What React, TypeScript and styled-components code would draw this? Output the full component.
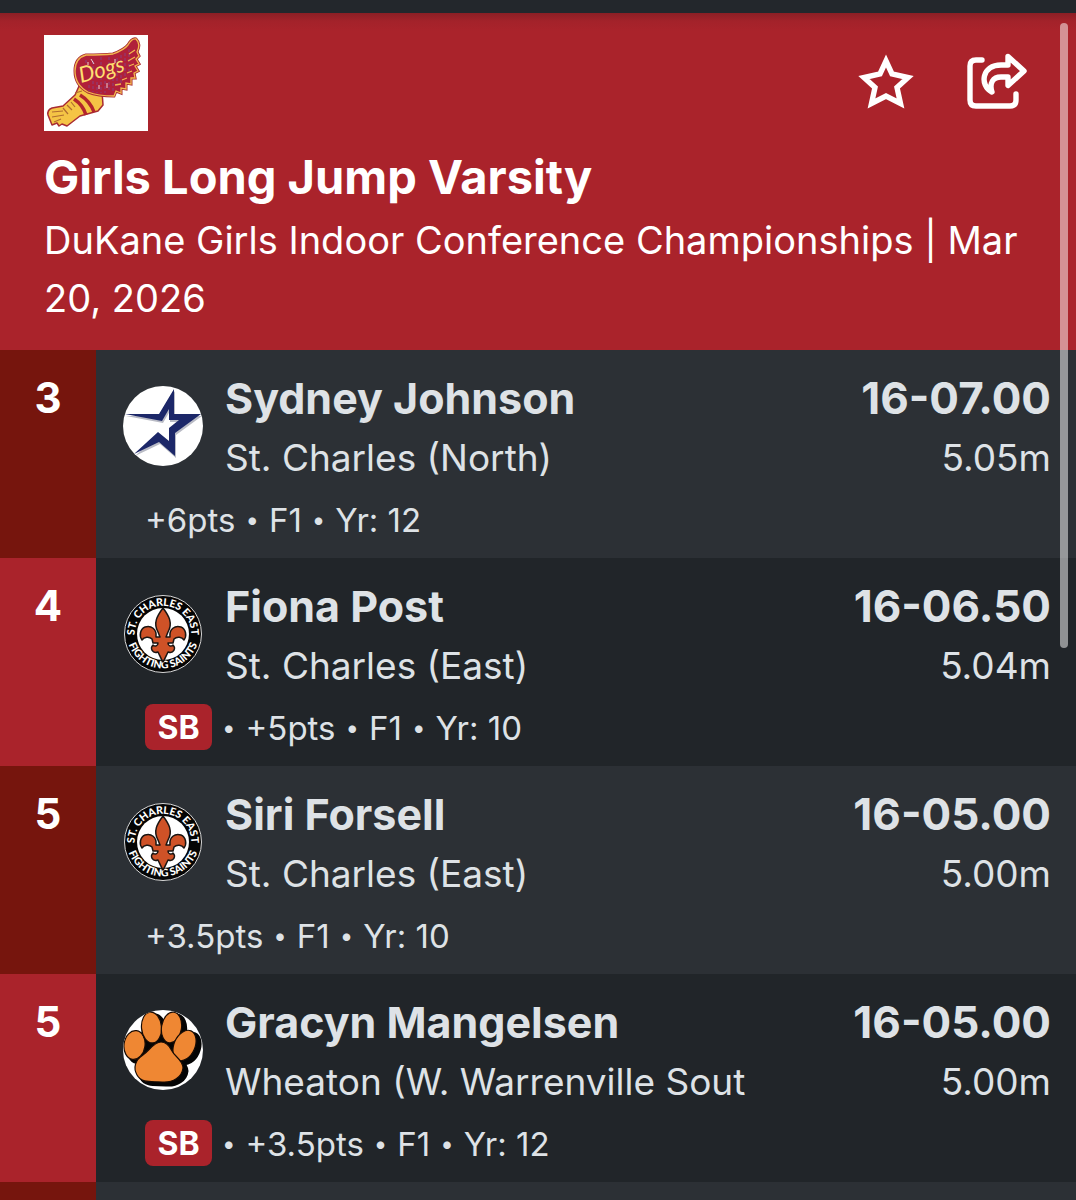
import React from "react";
import styled, { createGlobalStyle } from "styled-components";

const GlobalStyle = createGlobalStyle`
  *, *::before, *::after { box-sizing: border-box; }
  body {
    margin: 0;
    background: #212529;
    font-family: Inter, "Liberation Sans", sans-serif;
  }
`;

const Page = styled.main`
  position: relative;
  display: flex;
  flex-direction: column;
  height: 100vh;
  overflow: hidden;
  background: #212529;
  color: #dee2e6;
`;

const TopBar = styled.div`
  flex: none;
  height: 13px;
  background: #23272c;
`;

const Header = styled.header`
  flex: none;
  padding: 22px 44px 23px;
  background: linear-gradient(#8b1f25, #a3222a 8px, #aa232b 18px);
  color: #fff;
`;

const HeaderTop = styled.div`
  display: flex;
  align-items: center;
  justify-content: space-between;
  margin-bottom: 16px;
`;

const Actions = styled.div`
  display: flex;
  gap: 44px;
`;

const IconButton = styled.button`
  display: block;
  width: 68px;
  height: 68px;
  padding: 0;
  border: 0;
  background: none;
  color: #fff;
  cursor: pointer;
`;

const Title = styled.h1`
  margin: 0 0 4px;
  font-size: 47px;
  line-height: 60px;
  font-weight: 700;
`;

const Subtitle = styled.p`
  margin: 0;
  font-size: 38px;
  line-height: 58px;
`;

const Results = styled.ol`
  flex: 1;
  display: flex;
  flex-direction: column;
  margin: 0;
  padding: 0;
  list-style: none;
`;

const Row = styled.li<{ $shaded: boolean; $fill?: boolean }>`
  flex: ${(p) => (p.$fill ? "1 0 0" : "none")};
  display: grid;
  grid-template-columns: 96px 1fr;
  background: ${(p) => (p.$shaded ? "#2c3035" : "#212529")};
`;

const Rank = styled.div<{ $shaded: boolean }>`
  padding-top: 19px;
  background: ${(p) => (p.$shaded ? "#76150d" : "#aa232b")};
  color: #fff;
  font-size: 42px;
  line-height: 58px;
  font-weight: 700;
  text-align: center;
`;

const Entry = styled.div`
  min-width: 0;
  padding: 19px 25px 16px 27px;
`;

const Performance = styled.div`
  display: grid;
  grid-template-columns: 80px minmax(0, 1fr) auto;
  column-gap: 22px;
  margin-bottom: 7px;
`;

const Emblem = styled.div`
  align-self: start;
  height: 80px;
  margin-top: 17px;
`;

const Column = styled.div<{ $end?: boolean }>`
  min-width: 0;
  text-align: ${(p) => (p.$end ? "right" : "left")};
  white-space: nowrap;
`;

const Primary = styled.div`
  font-size: 43px;
  line-height: 58px;
  font-weight: 700;
`;

const Mark = styled(Primary)`
  font-size: 44px;
`;

const Secondary = styled.div`
  font-size: 37px;
  line-height: 62px;
`;

const Meta = styled.div`
  display: flex;
  align-items: center;
  gap: 10px;
  height: 46px;
  margin-left: 22px;
  font-size: 33px;
  line-height: 44px;
`;

const Detail = styled.span`
  padding-top: 2px;
`;

const Bullet = styled.span`
  padding-top: 2px;
  font-size: 24px;
`;

const Badge = styled.span`
  width: 67px;
  padding-top: 2px;
  border-radius: 8px;
  background: #aa232b;
  color: #fff;
  font-size: 32px;
  font-weight: 700;
  text-align: center;
`;

const ScrollThumb = styled.div`
  position: absolute;
  top: 23px;
  right: 8px;
  width: 8px;
  height: 625px;
  border-radius: 4px;
  background: rgba(255, 255, 255, 0.5);
`;

const Drawing = styled.svg`
  display: block;
  overflow: visible;
`;

const RoundDrawing = styled(Drawing)`
  border-radius: 50%;
  overflow: hidden;
`;

function StarIcon() {
  return (
    <Drawing width="68" height="68" viewBox="0 0 68 68" fill="none" stroke="currentColor" strokeWidth="5.4" aria-hidden="true">
      <path d="M34 12L40 25L56 28.500L45 38.500L48.500 54.500L34 47L19.500 54.500L23 38.500L12 28.500L28 25Z" />
    </Drawing>
  );
}

function ShareIcon() {
  return (
    <Drawing width="68" height="68" viewBox="0 0 68 68" fill="none" stroke="currentColor" strokeWidth="5.4" strokeLinecap="round" strokeLinejoin="round" aria-hidden="true">
      <path d="M18 11H12Q6 11 6 17V51Q6 57 12 57H46Q52 57 52 51V45" />
      <path d="M44 7.500L60 22L44 36.500V28H37C29 28 25 34 28 43C15 36 18 16 37 16H44Z" />
    </Drawing>
  );
}

function WingedFootLogo() {
  return (
    <Drawing width="104" height="96" viewBox="0 0 104 96" role="img" aria-label="Dogs">
      <rect width="104" height="96" fill="#fff" />
      <path d="M36 49L31 60L19 71L8 73Q3 75 4 80L8 90L13 88L15 91L18 89L23 91L36 81L54 76L59 70L58 56Z" fill="#f5c445" stroke="#a82b32" strokeWidth="1.500" strokeLinejoin="round" />
      <path d="M31 36Q31 23 42 20Q58 20 69 19Q80 15 84 10Q88 3 92 4Q97 9 93 17L95 21L92 24L95 29L91 31L94 36L90 38L91 43L87 43L87 49L82 48L82 54L77 53L77 58L72 56L70 61Q54 61 44 57Q31 50 31 36Z" fill="#a82b32" stroke="#a82b32" strokeWidth="3" />
      <path d="M31 36Q31 23 42 20Q58 20 69 19Q80 15 84 10Q88 3 92 4Q97 9 93 17L95 21L92 24L95 29L91 31L94 36L90 38L91 43L87 43L87 49L82 48L82 54L77 53L77 58L72 56L70 61Q54 61 44 57Q31 50 31 36Z" fill="#b0203a" stroke="#f3b84f" strokeWidth="1.300" />
      <path d="M45 50V56M49 26V57M53 47V58M57 22V58M61 46V58M65 22V57M69 43V56M73 23V52M77 20V48M81 18V43M85 14V37M42 25V34" stroke="#8a3f7c" strokeWidth="1" strokeDasharray="3 2" />
      <path d="M47 24L50 29M55 50V54M63 48V53M71 24V28M44 27V30" stroke="#e9cfd6" strokeWidth="1" />
      <path d="M85 31L90 29M84 26L91 22M83 38L88 36M78 45L83 43M71 50L77 49M85 19L91 15" stroke="#f3b84f" strokeWidth="1.300" />
      <path d="M30 64Q39 70 42 80M36 60Q46 66 50 77" fill="none" stroke="#b3242c" strokeWidth="3.500" />
      <path d="M27 67L31 72M23 70L28 75M19 73L24 79M8 77L19 76M8 82L20 80M10 87L17 84M31 58L38 56" stroke="#b06c30" strokeWidth="1.200" />
      <text x="37" y="48" transform="rotate(-15 37 48)" fill="#ffe070" fontFamily="Lato, sans-serif" fontSize="22" fontStyle="italic" fontWeight="400">Dogs</text>
    </Drawing>
  );
}

function StarLogo() {
  return (
    <RoundDrawing width="80" height="80" viewBox="0 0 80 80" role="img" aria-label="St. Charles North">
      <rect width="80" height="80" fill="#fff" />
      <path transform="translate(1 2)" fill="#b9bbc5" d="M2 28L36 28L51 3V28H78L52 47V70L36 56L11 68L35 46L46 55V42L56 34H46V23L39 35Z" />
      <path fill="#1c2768" d="M2 28L36 28L51 3V28H78L52 47V70L36 56L11 68L35 46L46 55V42L56 34H46V23L39 35Z" />
    </RoundDrawing>
  );
}

function SaintsLogo({ id }: { id: string }) {
  return (
    <Drawing width="80" height="80" viewBox="0 0 80 80" role="img" aria-label="St. Charles East Fighting Saints">
      <defs>
        <path id={`${id}-top`} d="M13.500 50A28.300 28.300 0 1 1 66.500 50" />
        <path id={`${id}-bottom`} d="M4 44A36.500 36.500 0 0 0 76 44" />
      </defs>
      <circle cx="40" cy="40" r="38.500" fill="#050505" stroke="#d8d8d8" strokeWidth="1" />
      <circle cx="40" cy="40" r="26" fill="#fff" />
      <g fill="#fff" fontFamily="Lato, sans-serif" fontSize="11" fontWeight="900">
        <text textAnchor="middle" fontSize="10.500"><textPath href={`#${id}-top`} startOffset="50%">ST. CHARLES EAST</textPath></text>
        <text textAnchor="middle" fontSize="10.500"><textPath href={`#${id}-bottom`} startOffset="50%">FIGHTING SAINTS</textPath></text>
      </g>
      <path d="M40 14C34 22 30 29 35 38L37 43H33C34 35 28 31 22 33C17 35 16 42 19 46C21 43 26 42 29 45L30 49H35C35 52 32 53 30 51C27 54 29 60 35 58C37 62 38 65 40 68C42 65 43 62 45 58C51 60 53 54 50 51C48 53 45 52 45 49H50L51 45C54 42 59 43 61 46C64 42 63 35 58 33C52 31 46 35 47 43H43L45 38C50 29 46 22 40 14Z" fill="#cf5227" stroke="#1b1512" strokeWidth="1.500" strokeLinejoin="round" />
    </Drawing>
  );
}

function PawShapes() {
  return (
    <>
      <ellipse cx="11.500" cy="35" rx="10.500" ry="14.500" transform="rotate(8 11.500 35)" />
      <ellipse cx="28.500" cy="17.500" rx="10" ry="15.500" transform="rotate(-5 28.500 17.500)" />
      <ellipse cx="48.500" cy="17.500" rx="10" ry="15.500" transform="rotate(9 48.500 17.500)" />
      <ellipse cx="61.500" cy="35.500" rx="10.500" ry="16" transform="rotate(24 61.500 35.500)" />
      <path d="M38 32C31 32 26 41 20 45C12 50 10 58 14 65C19 74 30 71 39 72C50 73 59 67 60 58C60 50 52 47 49 41C46 35 43 32 38 32Z" />
    </>
  );
}

function PawLogo() {
  return (
    <RoundDrawing width="80" height="80" viewBox="0 0 80 80" role="img" aria-label="Wheaton Warrenville South">
      <rect width="80" height="80" fill="#fff" />
      <path d="M20 30L38 28L56 30L56 46L20 44Z" fill="#050505" />
      <g fill="#050505" stroke="#050505" strokeWidth="3" transform="translate(4 3)"><PawShapes /></g>
      <g fill="#ef8733" stroke="#1a0c04" strokeWidth="1.200"><PawShapes /></g>
    </RoundDrawing>
  );
}

type Result = {
  rank: number;
  name: string;
  school: string;
  mark: string;
  metric: string;
  seasonBest?: boolean;
  details: string[];
  logo: React.ReactNode;
};

const results: Result[] = [
  { rank: 3, name: "Sydney Johnson", school: "St. Charles (North)", mark: "16-07.00", metric: "5.05m", details: ["+6pts", "F1", "Yr: 12"], logo: <StarLogo /> },
  { rank: 4, name: "Fiona Post", school: "St. Charles (East)", mark: "16-06.50", metric: "5.04m", seasonBest: true, details: ["+5pts", "F1", "Yr: 10"], logo: <SaintsLogo id="saints-post" /> },
  { rank: 5, name: "Siri Forsell", school: "St. Charles (East)", mark: "16-05.00", metric: "5.00m", details: ["+3.5pts", "F1", "Yr: 10"], logo: <SaintsLogo id="saints-forsell" /> },
  { rank: 5, name: "Gracyn Mangelsen", school: "Wheaton (W. Warrenville Sout", mark: "16-05.00", metric: "5.00m", seasonBest: true, details: ["+3.5pts", "F1", "Yr: 12"], logo: <PawLogo /> },
];

function ResultRow({ result, shaded }: { result: Result; shaded: boolean }) {
  return (
    <Row $shaded={shaded}>
      <Rank $shaded={shaded}>{result.rank}</Rank>
      <Entry>
        <Performance>
          <Emblem>{result.logo}</Emblem>
          <Column>
            <Primary>{result.name}</Primary>
            <Secondary>{result.school}</Secondary>
          </Column>
          <Column $end>
            <Mark>{result.mark}</Mark>
            <Secondary>{result.metric}</Secondary>
          </Column>
        </Performance>
        <Meta>
          {result.seasonBest && <Badge>SB</Badge>}
          {result.details.map((detail, index) => (
            <React.Fragment key={detail}>
              {(index > 0 || result.seasonBest) && <Bullet>•</Bullet>}
              <Detail>{detail}</Detail>
            </React.Fragment>
          ))}
        </Meta>
      </Entry>
    </Row>
  );
}

export default function App() {
  return (
    <Page>
      <GlobalStyle />
      <TopBar />
      <Header>
        <HeaderTop>
          <WingedFootLogo />
          <Actions>
            <IconButton type="button" aria-label="Favorite"><StarIcon /></IconButton>
            <IconButton type="button" aria-label="Share"><ShareIcon /></IconButton>
          </Actions>
        </HeaderTop>
        <Title>Girls Long Jump Varsity</Title>
        <Subtitle>DuKane Girls Indoor Conference Championships | Mar 20, 2026</Subtitle>
      </Header>
      <Results>
        {results.map((result, index) => (
          <ResultRow key={result.name} result={result} shaded={index % 2 === 0} />
        ))}
        <Row $shaded $fill aria-hidden="true">
          <Rank $shaded />
        </Row>
      </Results>
      <ScrollThumb />
    </Page>
  );
}
